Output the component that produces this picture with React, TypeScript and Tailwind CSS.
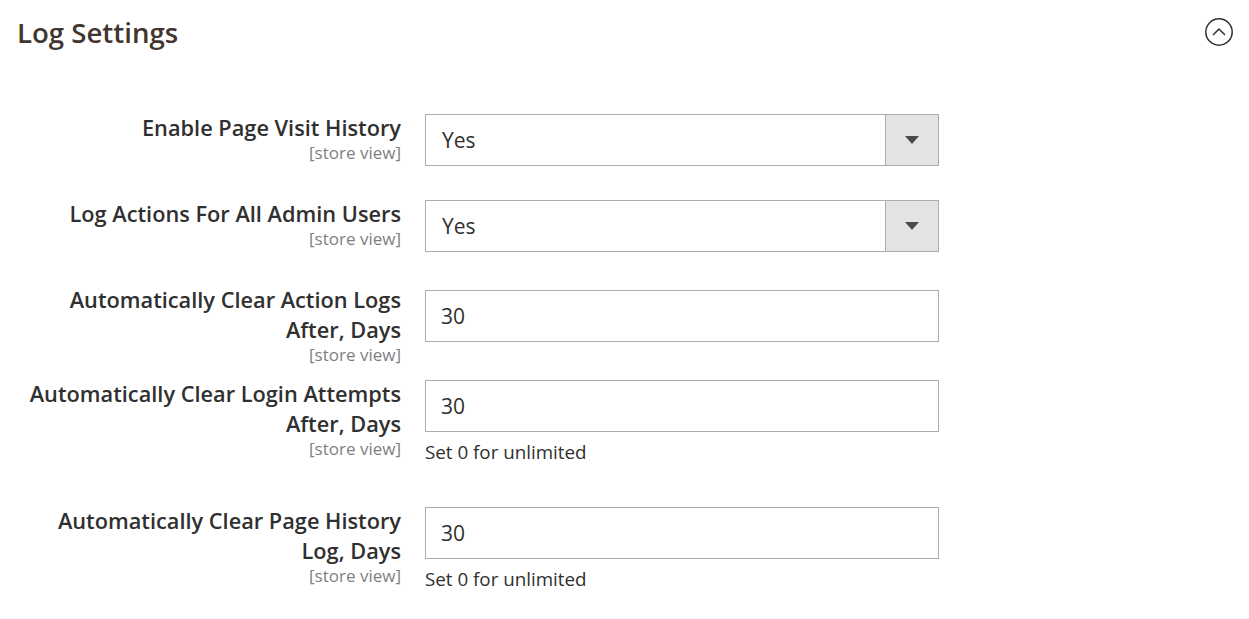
import React from "react";

type Row = {
  label: string[];
  value: string;
  select?: boolean;
  note?: string;
  labelShift: string;
  height: string;
};

const rows: Row[] = [
  { label: ["Enable Page Visit History"], value: "Yes", select: true, labelShift: "-mt-[1px]", height: "h-[86px]" },
  { label: ["Log Actions For All Admin Users"], value: "Yes", select: true, labelShift: "-mt-[1px]", height: "h-[90px]" },
  { label: ["Automatically Clear Action Logs", "After, Days"], value: "30", labelShift: "-mt-[5px]", height: "h-[90px]" },
  { label: ["Automatically Clear Login Attempts", "After, Days"], value: "30", note: "Set 0 for unlimited", labelShift: "-mt-[1px]", height: "h-[127px]" },
  { label: ["Automatically Clear Page History", "Log, Days"], value: "30", note: "Set 0 for unlimited", labelShift: "-mt-[1px]", height: "h-[90px]" },
];

function CollapseIcon() {
  return (
    <svg width="30" height="30" viewBox="0 0 30 30" fill="none">
      <circle cx="15" cy="15" r="13.2" stroke="#303030" strokeWidth="1.5" />
      <path d="M9.5 17.5 L15 12 L20.5 17.5" stroke="#303030" strokeWidth="1.5" strokeLinecap="round" strokeLinejoin="round" />
    </svg>
  );
}

function Field({ row }: { row: Row }) {
  return (
    <div className={`flex items-start ${row.height}`}>
      <div className={`w-[401px] shrink-0 text-right ${row.labelShift}`}>
        {row.label.map((l) => (
          <div key={l} className="text-[21.75px] leading-[30px] font-semibold text-[#303030]">
            {l}
          </div>
        ))}
        <div className="text-[17px] leading-[20px] text-[#808080]">[store view]</div>
      </div>
      <div className="ml-[24px] w-[514px]">
        {row.select ? (
          <div className="flex h-[52px] border border-[#adadad] bg-white">
            <div className="flex-1 flex items-center pl-[16px] pt-[2px] text-[21px] text-[#303030]">{row.value}</div>
            <div className="w-[53px] flex items-center justify-center bg-[#e3e3e3] border-l border-[#adadad]">
              <svg width="14" height="8" viewBox="0 0 14 8">
                <path d="M0 0 H14 L7 8 Z" fill="#514943" />
              </svg>
            </div>
          </div>
        ) : (
          <div className="flex items-center h-[52px] border border-[#adadad] bg-white pl-[15px] pt-[2px] text-[21px] text-[#303030]">
            {row.value}
          </div>
        )}
        {row.note && (
          <div className="mt-[8px] text-[18.8px] leading-[24px] text-[#303030]">{row.note}</div>
        )}
      </div>
    </div>
  );
}

export default function App() {
  return (
    <div className="w-[1249px] h-[619px] bg-white overflow-hidden" style={{ fontFamily: '"Open Sans", sans-serif' }}>
      <div className="flex items-center justify-between pl-[17px] pr-[15px] pt-[13px]">
        <h2 className="text-[27.6px] leading-[38px] font-semibold text-[#41362f]">Log Settings</h2>
        <CollapseIcon />
      </div>
      <div className="mt-[63px]">
        {rows.map((r) => (
          <Field key={r.label[0]} row={r} />
        ))}
      </div>
    </div>
  );
}
